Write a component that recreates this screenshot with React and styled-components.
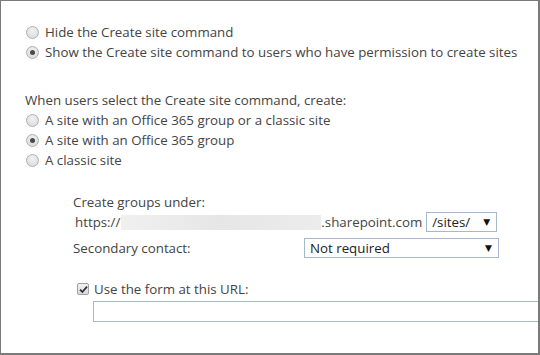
import React from "react";
import styled, { createGlobalStyle } from "styled-components";

const Global = createGlobalStyle`
  html, body {
    margin: 0;
    padding: 0;
    background: #fff;
  }
  * {
    box-sizing: border-box;
  }
`;

function Option({ checked, children }) {
  return (
    <OptionRow>
      <Radio $checked={checked} />
      <OptionText>{children}</OptionText>
    </OptionRow>
  );
}

function App() {
  return (
    <>
      <Global />
      <Frame>
        <Group>
          <Option>Hide the Create site command</Option>
          <Option checked>
            Show the Create site command to users who have permission to create sites
          </Option>
        </Group>

        <Heading>When users select the Create site command, create:</Heading>
        <Group>
          <Option>A site with an Office 365 group or a classic site</Option>
          <Option checked>A site with an Office 365 group</Option>
          <Option>A classic site</Option>
        </Group>

        <Settings>
          <Label>Create groups under:</Label>
          <UrlRow>
            <span>https://</span>
            <Redacted />
            <span>.sharepoint.com</span>
            <Select $width={71}>
              <span>/sites/</span>
              <Arrow>▼</Arrow>
            </Select>
          </UrlRow>
          <ContactRow>
            <Label>Secondary contact:</Label>
            <Select $width={195}>
              <span>Not required</span>
              <Arrow>▼</Arrow>
            </Select>
          </ContactRow>
          <CheckRow>
            <Checkbox>
              <svg width="9" height="9" viewBox="0 0 9 9">
                <path
                  d="M1 4.6 L3.4 7 L8 1.6"
                  fill="none"
                  stroke="#333"
                  strokeWidth="1.8"
                />
              </svg>
            </Checkbox>
            <span>Use the form at this URL:</span>
          </CheckRow>
          <UrlInput />
        </Settings>
      </Frame>
    </>
  );
}

export default App;

const Frame = styled.div`
  width: 540px;
  height: 355px;
  border: 2px solid #7a7a7a;
  border-left-width: 1px;
  border-top-width: 1px;
  overflow: hidden;
  padding: 21px 0 0 24px;
  font-family: "Open Sans", "Noto Sans", sans-serif;
  font-size: 13.3px;
  color: #444;
`;

const Group = styled.div`
  display: flex;
  flex-direction: column;
`;

const OptionRow = styled.div`
  display: flex;
  align-items: center;
  height: 20px;
`;

const Radio = styled.span`
  flex: none;
  width: 13px;
  height: 13px;
  margin-left: 1px;
  margin-right: 6px;
  border-radius: 50%;
  border: 1px solid #b0b0b0;
  background: radial-gradient(circle at 50% 35%, #f2f2f2 0%, #d6d6d6 100%);
  position: relative;

  &::after {
    content: "";
    display: ${(p) => (p.$checked ? "block" : "none")};
    position: absolute;
    left: 3px;
    top: 3px;
    width: 5px;
    height: 5px;
    border-radius: 50%;
    background: #4a4a4a;
  }
`;

const OptionText = styled.span`
  white-space: nowrap;
`;

const Heading = styled.div`
  margin-top: 28px;
  height: 20px;
  line-height: 20px;
  white-space: nowrap;
`;

const Settings = styled.div`
  display: flex;
  flex-direction: column;
  padding-left: 48px;
  margin-top: 22px;
`;

const Label = styled.div`
  line-height: 20px;
  white-space: nowrap;
`;

const UrlRow = styled.div`
  display: flex;
  align-items: center;
  height: 20px;
  padding-left: 2px;
  white-space: nowrap;
`;

const Redacted = styled.span`
  width: 200px;
  height: 15px;
  margin: 0 0 0 1px;
  background: linear-gradient(90deg, #f0f0f0, #e6e6e6 50%, #ececec);
`;

const Select = styled.div`
  display: flex;
  align-items: center;
  justify-content: space-between;
  width: ${(p) => p.$width}px;
  height: 20px;
  margin-left: 4px;
  padding: 0 6px 0 5px;
  border: 1px solid #a6b8cb;
  background: #fff;
  color: #222;
`;

const Arrow = styled.span`
  font-family: "DejaVu Sans", sans-serif;
  font-size: 9px;
  color: #111;
`;

const ContactRow = styled.div`
  display: flex;
  align-items: center;
  justify-content: space-between;
  width: 426px;
  margin-top: 6px;

  ${Select} {
    margin-left: 0;
  }
`;

const CheckRow = styled.div`
  display: flex;
  align-items: center;
  height: 20px;
  margin-top: 21px;
  padding-left: 4px;
  white-space: nowrap;
`;

const Checkbox = styled.span`
  display: flex;
  align-items: center;
  justify-content: center;
  width: 12px;
  height: 12px;
  margin-right: 5px;
  border: 1px solid #a0a0a0;
  border-radius: 2px;
  background: linear-gradient(#f2f2f2, #dadada);
`;

const UrlInput = styled.div`
  margin-left: 20px;
  margin-top: 2px;
  width: 460px;
  height: 21px;
  flex: none;
  border: 1px solid #a3b9cc;
`;
